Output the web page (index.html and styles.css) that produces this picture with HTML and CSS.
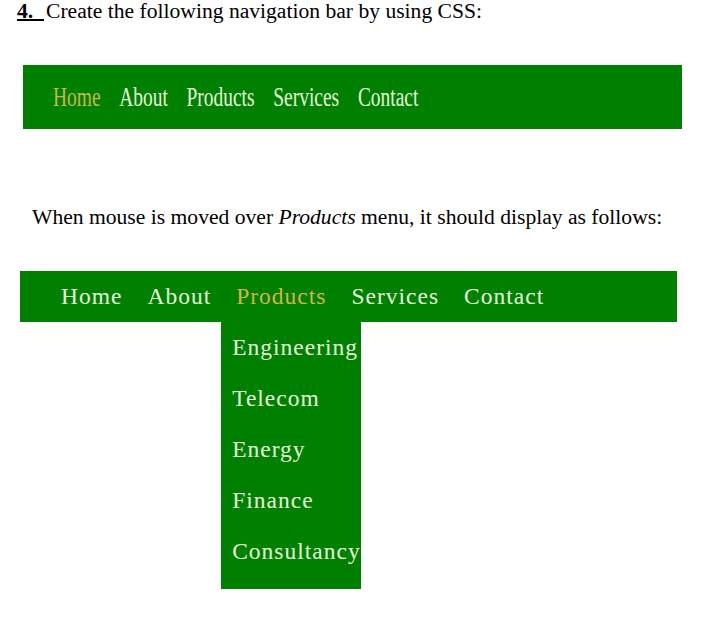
FILE: index.html
```html
<!DOCTYPE html>
<html>
<head>
<meta charset="utf-8">
<link rel="stylesheet" href="styles.css">
</head>
<body>
<p class="heading"><span class="num">4.&nbsp;&nbsp;</span><span class="after">Create the following navigation bar by using CSS:</span></p>
<nav class="bar1">
  <ul class="menu1">
    <li class="active">Home</li>
    <li>About</li>
    <li>Products</li>
    <li>Services</li>
    <li>Contact</li>
  </ul>
</nav>
<p class="desc">When mouse is moved over <em>Products</em> menu, it should display as follows:</p>
<nav class="bar2">
  <ul class="menu2">
    <li>Home</li>
    <li>About</li>
    <li class="active has-sub">Products
      <ul class="sub">
        <li>Engineering</li>
        <li>Telecom</li>
        <li>Energy</li>
        <li>Finance</li>
        <li>Consultancy</li>
      </ul>
    </li>
    <li>Services</li>
    <li>Contact</li>
  </ul>
</nav>
</body>
</html>
```
FILE: styles.css
```css
html, body {
  margin: 0;
  padding: 0;
  background: #fff;
}
body {
  font-family: "Liberation Serif", "Times New Roman", serif;
  color: #000;
  width: 706px;
  height: 642px;
  overflow: hidden;
}
.heading {
  margin: 0;
  padding: 0 0 0 17px;
  font-size: 21.6px;
  line-height: 22px;
}
.num {
  font-weight: bold;
  text-decoration: underline;
  text-decoration-thickness: 2px;
}
.after {
  margin-left: 2px;
}
.bar1 {
  margin: 43px 0 0 23px;
  width: 659px;
  height: 64px;
  padding-left: 30px;
  box-sizing: border-box;
  background: #008000;
  display: flex;
  align-items: center;
}
.menu1 {
  list-style: none;
  margin: 0;
  padding: 0;
  display: flex;
  gap: 26px;
  font-size: 27px;
  line-height: 30px;
  color: #e6f7d8;
  transform: scaleX(0.72);
  transform-origin: left center;
  white-space: nowrap;
}
.menu1 .active {
  color: #c9b64a;
}
.desc {
  margin: 76px 0 0 32px;
  font-size: 21.6px;
  line-height: 24px;
}
.bar2 {
  margin: 42px 0 0 20px;
  width: 657px;
  height: 51px;
  background: #008000;
}
.menu2 {
  list-style: none;
  margin: 0;
  padding: 0 0 0 41px;
  display: flex;
  gap: 25px;
  font-size: 23.5px;
  letter-spacing: 1px;
  line-height: 51px;
  color: #e6f7d8;
}
.menu2 > li {
  position: relative;
}
.menu2 > .active {
  color: #d6b53c;
}
.sub {
  position: absolute;
  top: 51px;
  left: -15px;
  width: 140px;
  margin: 0;
  padding: 0 0 0 11px;
  box-sizing: border-box;
  list-style: none;
  background: #008000;
  color: #e6f7d8;
  height: 267px;
}
.sub li {
  line-height: 51px;
  white-space: nowrap;
}
```
